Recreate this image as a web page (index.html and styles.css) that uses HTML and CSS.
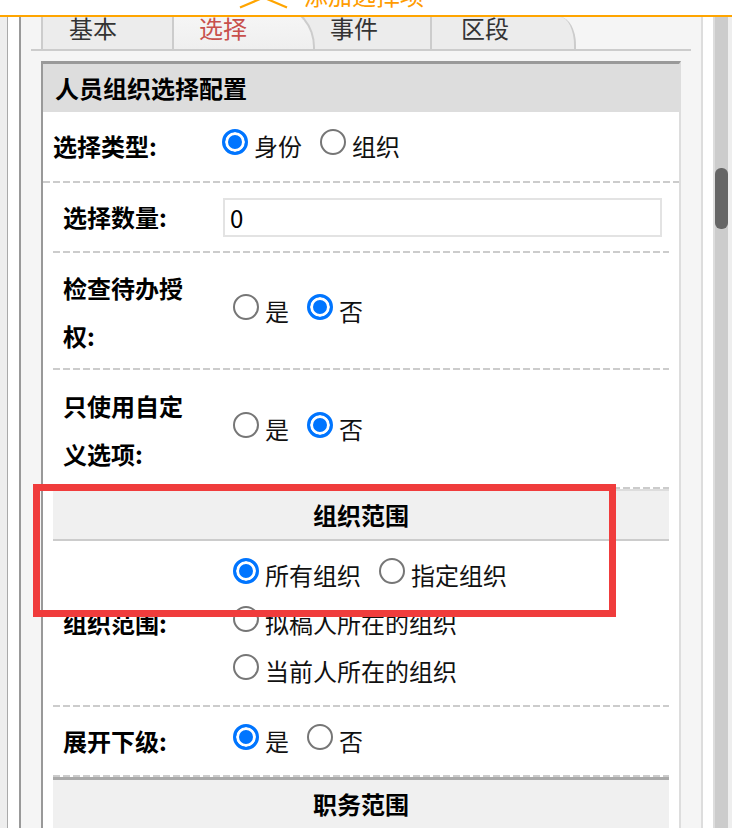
FILE: index.html
```html
<!DOCTYPE html>
<html lang="zh-CN">
<head>
<meta charset="utf-8">
<title>人员组织选择配置</title>
<link rel="stylesheet" href="styles.css">
</head>
<body>
<div class="topbar">
  <svg class="chev" width="50" height="15" viewBox="0 0 50 15"><polyline points="2,7.5 25.5,-2.5 49,7.5" fill="none" stroke="#ffa500" stroke-width="2.2"/></svg>
  <span class="addlink">添加选择项</span>
</div>
<div class="frame">
  <div class="edge-a"></div>
  <div class="edge-b"></div>
  <div class="main">
    <div class="tabs">
      <div class="tab t1">基本</div>
      <div class="tab t2">选择</div>
      <div class="tab t3">事件</div>
      <div class="tab t4">区段</div>
    </div>
    <div class="panel">
      <div class="panel-head">人员组织选择配置</div>
      <div class="row outer r1">
        <div class="lab">选择类型:</div>
        <div class="val"><label class="opt"><span class="radio on"></span>身份</label><label class="opt"><span class="radio"></span>组织</label></div>
      </div>
      <div class="inner">
        <div class="row r2">
          <div class="lab">选择数量:</div>
          <div class="val mid"><input class="txt" type="text" value="0"></div>
        </div>
        <div class="row r3">
          <div class="lab">检查待办授权:</div>
          <div class="val mid"><label class="opt"><span class="radio"></span>是</label><label class="opt"><span class="radio on"></span>否</label></div>
        </div>
        <div class="row r4">
          <div class="lab">只使用自定义选项:</div>
          <div class="val mid"><label class="opt"><span class="radio"></span>是</label><label class="opt"><span class="radio on"></span>否</label></div>
        </div>
        <div class="sec light">组织范围</div>
        <div class="row r5">
          <div class="lab mid">组织范围:</div>
          <div class="val">
            <div class="line"><label class="opt"><span class="radio on"></span>所有组织</label><label class="opt"><span class="radio"></span>指定组织</label></div>
            <div class="line"><label class="opt"><span class="radio"></span>拟稿人所在的组织</label></div>
            <div class="line"><label class="opt"><span class="radio"></span>当前人所在的组织</label></div>
          </div>
        </div>
        <div class="row r6">
          <div class="lab">展开下级:</div>
          <div class="val"><label class="opt"><span class="radio on"></span>是</label><label class="opt"><span class="radio"></span>否</label></div>
        </div>
        <div class="sec dark">职务范围</div>
      </div>
    </div>
  </div>
  <div class="gap"></div>
  <div class="scroll"><div class="thumb"></div></div>
  <div class="edge-c"></div>
</div>
<div class="mark"></div>
</body>
</html>
```
FILE: styles.css
```css
* { box-sizing: border-box; }
html, body { margin: 0; padding: 0; }
body {
  width: 732px;
  height: 828px;
  overflow: hidden;
  background: #fff;
  font-family: "Noto Sans CJK SC", "Noto Sans", sans-serif;
  font-size: 24px;
  color: #000;
}
.topbar {
  height: 17px;
  border-bottom: 2px solid #ffa500;
  display: flex;
  align-items: flex-start;
}
.chev { margin-left: 238px; display: block; }
.addlink {
  margin-left: 16px;
  margin-top: -17px;
  line-height: 24px;
  color: #ff9c00;
  white-space: nowrap;
}
.frame {
  display: flex;
  height: 811px;
  overflow: hidden;
}
.edge-a { width: 8px; background: #eee; border-right: 1px solid #aaa; }
.edge-b { width: 13px; background: #fff; border-right: 2px solid #999; }
.main {
  width: 682px;
  background: #f5f5f5;
  border-right: 2px solid #ddd;
  padding: 0 20px;
}
.gap { width: 12px; background: #fff; border-right: 2px solid #ddd; }
.scroll { width: 13px; background: #ccc; padding-top: 151px; }
.thumb { height: 61px; background: #666; border-radius: 6px; }
.edge-c { width: 4px; background: #eee; }

.tabs {
  display: flex;
  align-items: flex-end;
  height: 34px;
  margin: 0 -10px;
  padding-left: 10px;
  border-bottom: 2px solid #ccc;
}
.tab {
  height: 32px;
  line-height: 22px;
  padding-bottom: 10px;
  background: #ececec;
  color: #333;
  white-space: nowrap;
  flex: none;
}
.t1 { width: 131px; border-left: 2px solid #ccc; padding-left: 26px; }
.t2 {
  position: relative;
  z-index: 2;
  width: 143px;
  height: 42px;
  padding-top: 8px;
  padding-left: 25px;
  border: 2px solid #ccc;
  border-bottom: 0;
  border-radius: 10px 34px 0 0 / 10px 40px 0 0;
  background: linear-gradient(#f7f7f7, #efefef);
  color: #c8504c;
}
.t3 { width: 127px; margin-left: -12px; padding-left: 27px; }
.t4 {
  width: 146px;
  padding-left: 29px;
  border-left: 2px solid #ccc;
  border-right: 2px solid #ccc;
  border-top-right-radius: 16px 28px;
}

.panel {
  margin-top: 10px;
  height: 800px;
  background: #fff;
  border-top: 3px solid #999;
  border-left: 2px solid #999;
  border-right: 2px solid #ddd;
}
.panel-head {
  height: 48px;
  line-height: 48px;
  background: #ddd;
  padding-left: 12px;
  font-weight: bold;
}
.row {
  display: grid;
  grid-template-columns: 170px 1fr;
  padding-bottom: 2px;
  background: repeating-linear-gradient(90deg, #ccc 0 7px, transparent 7px 10px) left bottom / 100% 2px no-repeat;
  line-height: 48px;
}
.row.outer { grid-template-columns: 169px 1fr; }
.lab {
  font-weight: bold;
  padding: 10px 20px 10px 10px;
}
.val { padding: 10px 0; color: #111; }
.val.mid, .lab.mid { align-self: center; padding-top: 0; padding-bottom: 0; }
.r1 .lab, .r1 .val { padding-top: 10px; padding-bottom: 11px; }
.r3 .lab { padding-top: 11px; padding-bottom: 8px; }
.r4 .lab { padding-top: 12px; padding-bottom: 9px; }
.inner { margin: 0 10px; }

.opt { margin-right: 8px; white-space: nowrap; }
.radio {
  display: inline-block;
  width: 26px;
  height: 26px;
  border-radius: 50%;
  border: 2px solid #767676;
  background: #fff;
  margin: 0 6px 1px 10px;
  vertical-align: baseline;
}
.radio.on {
  border: 3px solid #0075ff;
  background: #0075ff;
  box-shadow: inset 0 0 0 3px #fff;
}
.txt {
  display: block;
  width: 439px;
  height: 39px;
  margin: 0;
  padding: 0 5px;
  border: 2px solid #e3e3e3;
  background: #fff;
  font-family: "Noto Sans CJK SC", "Noto Sans", sans-serif;
  font-size: 24px;
  color: #000;
  outline: none;
}
.sec {
  text-align: center;
  font-weight: bold;
  line-height: 48px;
  background: #f0f0f0;
}
.sec.light { border-top: 2px solid #ddd; border-bottom: 2px solid #ccc; }
.sec.dark { border-top: 3px solid #aaa; }

.mark {
  position: absolute;
  left: 33px;
  top: 484px;
  width: 583px;
  height: 133px;
  border: 7px solid #f03c3c;
  pointer-events: none;
}
```
